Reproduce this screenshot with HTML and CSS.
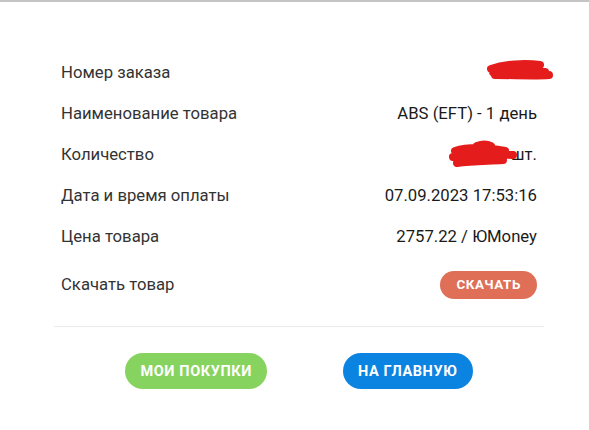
FILE: index.html
```html
<!DOCTYPE html>
<html lang="ru">
<head>
<meta charset="utf-8">
<link rel="stylesheet" href="styles.css">
</head>
<body>
<div class="topline"></div>
<div class="card">
  <div class="rows">
    <div class="row">
      <span class="label">Номер заказа</span>
      <span class="value redacted">1
        <svg class="blob blob1" width="70" height="22" viewBox="0 0 70 22"><path d="M6 9 C20 4, 40 3, 55 5 M8 12 C25 9, 45 9, 60 12 M10 15 C30 15, 50 16, 64 15" stroke="#e51c1c" stroke-width="8" stroke-linecap="round" fill="none"/></svg>
      </span>
    </div>
    <div class="row">
      <span class="label">Наименование товара</span>
      <span class="value">ABS (EFT) - 1 день</span>
    </div>
    <div class="row">
      <span class="label">Количество</span>
      <span class="value redacted">1 шт.
        <svg class="blob blob3" width="72" height="32" viewBox="0 0 72 32"><path d="M8 12 C20 8, 40 8, 58 12 M6 18 C25 14, 45 15, 66 16 M10 24 C25 22, 40 22, 56 21 M30 7 C35 5, 40 5, 44 7" stroke="#e51c1c" stroke-width="8" stroke-linecap="round" fill="none"/></svg>
      </span>
    </div>
    <div class="row">
      <span class="label">Дата и время оплаты</span>
      <span class="value">07.09.2023 17:53:16</span>
    </div>
    <div class="row">
      <span class="label">Цена товара</span>
      <span class="value">2757.22 / ЮMoney</span>
    </div>
    <div class="row row-dl">
      <span class="label">Скачать товар</span>
      <a class="btn btn-small btn-red">Скачать</a>
    </div>
  </div>
  <div class="divider"></div>
  <div class="actions">
    <a class="btn btn-green">Мои покупки</a>
    <a class="btn btn-blue">На главную</a>
  </div>
</div>
</body>
</html>
```
FILE: styles.css
```css
html, body {
  margin: 0;
  padding: 0;
  background: #fff;
  font-family: Roboto, "Liberation Sans", Arial, sans-serif;
}
.topline {
  height: 2px;
  background: #c4c4c4;
}
.card {
  width: 490px;
  margin-left: 54px;
  padding-top: 50px;
}
.rows {
  padding: 0 7px;
}
.row {
  display: flex;
  justify-content: space-between;
  align-items: center;
  height: 41px;
  font-size: 16.7px;
  line-height: 20px;
}
.row-dl {
  height: 55px;
}
.label {
  color: #333;
}
.value {
  color: #1a1a1a;
  position: relative;
}
.blob {
  position: absolute;
}
.blob1 {
  right: -18px;
  top: -3px;
}
.blob3 {
  right: 18px;
  top: -6px;
}
.divider {
  height: 1px;
  background: #ebebeb;
  margin-top: 14px;
}
.actions {
  display: flex;
  justify-content: center;
  gap: 76px;
  padding-top: 26px;
}
.btn {
  display: inline-flex;
  align-items: center;
  justify-content: center;
  color: #fff;
  font-weight: 700;
  text-transform: uppercase;
  letter-spacing: 0.6px;
  border-radius: 20px;
  font-size: 14.5px;
}
.btn-green {
  background: #87d35f;
  height: 36px;
  padding: 0 15px;
}
.btn-blue {
  background: #0b84e1;
  height: 36px;
  padding: 0 15px;
}
.btn-small {
  height: 28px;
  padding: 0 16px;
  font-size: 13.4px;
  border-radius: 14px;
}
.btn-red {
  background: #e06f57;
}
```
